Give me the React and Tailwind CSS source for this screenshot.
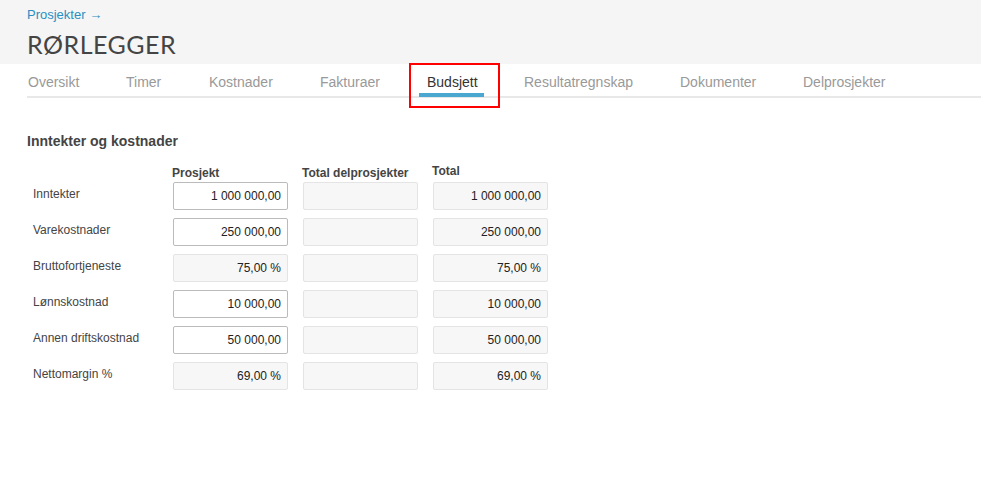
export default function App() {
  const tabs = ["Oversikt","Timer","Kostnader","Fakturaer","Budsjett","Resultatregnskap","Dokumenter","Delprosjekter"];
  const lefts = [28,126,209,320,427,524,680,803];
  const rows = [
    ["Inntekter","1 000 000,00",true,"1 000 000,00"],
    ["Varekostnader","250 000,00",true,"250 000,00"],
    ["Bruttofortjeneste","75,00 %",false,"75,00 %"],
    ["Lønnskostnad","10 000,00",true,"10 000,00"],
    ["Annen driftskostnad","50 000,00",true,"50 000,00"],
    ["Nettomargin %","69,00 %",false,"69,00 %"],
  ];
  return (
    <div className="w-[981px] h-[503px] bg-white text-[#333]" style={{fontFamily:'"Liberation Sans", Arial, sans-serif'}}>
      <div className="h-[64px] bg-[#f5f5f5] pl-[27px] pt-[6px]">
        <div className="text-[13px] text-[#2a8fc1] leading-[18px]">Prosjekter →</div>
        <div className="text-[25px] leading-[32px] mt-[4px] text-[#444] tracking-[0.5px]" style={{fontFamily:'Lato, sans-serif'}}>RØRLEGGER</div>
      </div>
      <div className="relative ml-[27px] h-[34px] border-b-2 border-[#e8e8e8]">
        {tabs.map((t,i)=>(
          <div key={t} className={`absolute top-[8px] text-[14px] ${t==="Budsjett"?"text-[#333]":"text-[#999]"}`} style={{left:lefts[i]-27}}>{t}</div>
        ))}
        <div className="absolute left-[392px] top-[29px] w-[65px] h-[4px] bg-[#4aa8d0]"></div>
        <div className="absolute left-[382px] top-[-1px] w-[91px] h-[45px] border-2 border-[#ff0000]"></div>
      </div>
      <div className="pl-[27px] pt-[33px]">
        <div className="text-[14px] font-bold text-[#444]">Inntekter og kostnader</div>
        <div className="flex mt-[12px] text-[12px] font-bold text-[#444] h-[20px]">
          <div className="w-[145px]"></div>
          <div className="w-[130px]">Prosjekt</div>
          <div className="w-[130px]">Total delprosjekter</div>
          <div className="mt-[-2px]">Total</div>
        </div>
        <div className="flex flex-col gap-[8px] mt-[-2px]">
          {rows.map(([l,p,e,t])=>(
            <div key={l} className="flex items-center h-[28px] text-[12px]">
              <div className="w-[146px] pl-[6px] text-[#444] mt-[-4px]">{l}</div>
              <div className={`w-[115px] h-[28px] rounded-[2px] border flex items-center justify-end pr-[6px] text-[#222] ${e?"bg-white border-[#bbb]":"bg-[#f7f7f7] border-[#e4e4e4]"}`}>{p}</div>
              <div className="w-[115px] h-[28px] ml-[15px] rounded-[2px] border bg-[#f7f7f7] border-[#e4e4e4]"></div>
              <div className="w-[115px] h-[28px] ml-[15px] rounded-[2px] border bg-[#f7f7f7] border-[#e4e4e4] flex items-center justify-end pr-[6px] text-[#222]">{t}</div>
            </div>
          ))}
        </div>
      </div>
    </div>
  );
}
